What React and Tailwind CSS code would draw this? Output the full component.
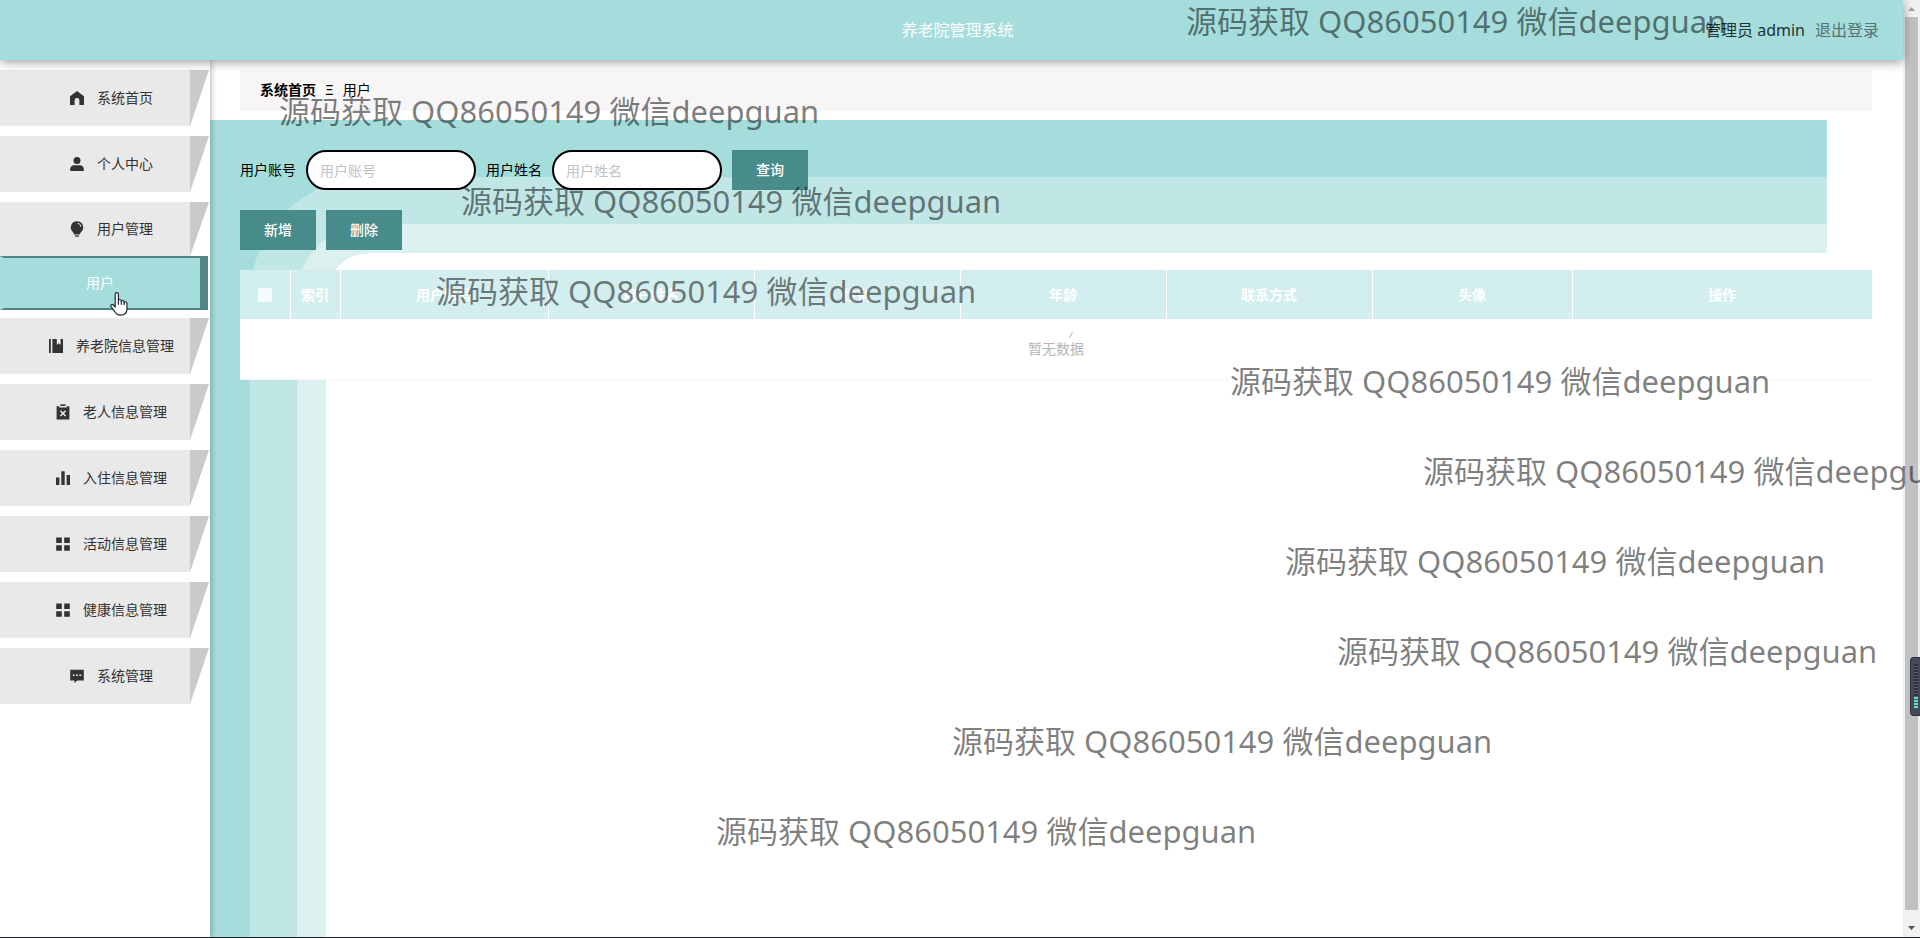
import React, { useState } from 'react';
import clsx from 'clsx';

const HomeIcon = () => (
  <svg viewBox="0 0 14 14" className="h-3.5 w-3.5" fill="currentColor">
    <path d="M7 0 0 5.2V14H4.6V9.400a2.400 2.400 0 0 1 4.800 0V14H14V5.2z" />
  </svg>
);

const UserIcon = () => (
  <svg viewBox="0 0 14 14" className="h-3.5 w-3.5" fill="currentColor">
    <circle cx="7" cy="3.6" r="3.5" />
    <path d="M0.200 14v-2.200C0.200 9.7 2 8.2 4 8.2h6c2 0 3.800 1.5 3.800 3.6V14z" />
  </svg>
);

const BulbIcon = () => (
  <svg viewBox="0 0 14 16" className="h-4 w-3.5" fill="currentColor">
    <path d="M7 0.3a6.2 6.2 0 0 0-3.8 11.1l1.2 2h5.2l1.2-2A6.2 6.2 0 0 0 7 0.3z" />
    <path d="M5 14.4h4v1.3H5z" />
    <path d="M7.6 2.2a4.2 4.2 0 0 1 3.5 3.6" fill="none" stroke="#e9e9e9" strokeWidth="1" />
  </svg>
);

const BookIcon = () => (
  <svg viewBox="0 0 14 14" className="h-3.5 w-3.5" fill="currentColor">
    <path d="M0 0h1.8v14H0zM3.400 0h4.400v6l1.900-1.700L11.600 6V0H14v14H3.400z" />
  </svg>
);

const ClipboardIcon = () => (
  <svg viewBox="0 0 14 16" className="h-4 w-3.5" fill="currentColor">
    <path d="M4.4 0.4h5.2v1.600H4.4z" />
    <path d="M0.6 2.2h2.6v1.2h7.6V2.2h2.6V15.6H0.6z" />
    <path d="m4.4 6.8 5.2 5.2M9.6 6.8 4.4 12" stroke="#e9e9e9" strokeWidth="1.6" />
  </svg>
);

const ChartIcon = () => (
  <svg viewBox="0 0 14 14" className="h-3.5 w-3.5" fill="currentColor">
    <path d="M0 6.5h3.4V14H0zM5.3 0.3h3.4V14H5.3zM10.6 4h3.4v10h-3.4z" />
  </svg>
);

const GridIcon = () => (
  <svg viewBox="0 0 14 14" className="h-3.5 w-3.5" fill="currentColor">
    <path d="M0.2 0.5h5.6v5.4H0.2zM8.2 0.5h5.6v5.4H8.2zM0.2 8.3h5.6v5.4H0.2zM8.2 8.3h5.6v5.4H8.2z" />
  </svg>
);

const ChatIcon = () => (
  <svg viewBox="0 0 14 14" className="h-3.5 w-3.5" fill="currentColor">
    <path d="M0.2 0.8h13.6v10.8H7.4L4.4 14v-2.400H0.2z" />
    <path d="M2.8 5.4h1.8v1.6H2.8zM6.1 5.4h1.8v1.6H6.1zM9.4 5.4h1.8v1.6H9.4z" fill="#e9e9e9" />
  </svg>
);

const menus = [
  { title: '系统首页', icon: HomeIcon },
  { title: '个人中心', icon: UserIcon },
  { title: '用户管理', icon: BulbIcon, children: ['用户'] },
  { title: '养老院信息管理', icon: BookIcon },
  { title: '老人信息管理', icon: ClipboardIcon },
  { title: '入住信息管理', icon: ChartIcon },
  { title: '活动信息管理', icon: GridIcon },
  { title: '健康信息管理', icon: GridIcon },
  { title: '系统管理', icon: ChatIcon },
];

const columns = [
  { title: '用户账号', width: 'w-[208px]' },
  { title: '用户姓名', width: 'w-[206px]' },
  { title: '性别', width: 'w-[206px]' },
  { title: '年龄', width: 'w-[206px]' },
  { title: '联系方式', width: 'w-[206px]' },
  { title: '头像', width: 'w-[200px]' },
  { title: '操作', width: 'w-[300px]' },
];

const watermarks = [
  { left: 1186, top: 0 },
  { left: 279, top: 90 },
  { left: 461, top: 180 },
  { left: 436, top: 270 },
  { left: 1230, top: 360 },
  { left: 1423, top: 450 },
  { left: 1285, top: 540 },
  { left: 1337, top: 630 },
  { left: 952, top: 720 },
  { left: 716, top: 810 },
];

const Header = () => (
  <header className="relative z-20 flex h-[60px] items-center justify-between bg-[#a4dddc] px-6 text-base shadow-[0_2px_10px_rgba(0,0,0,0.4)]">
    <div className="flex-1"></div>
    <h1 className="pl-3 text-white">养老院管理系统</h1>
    <div className="flex flex-1 justify-end gap-2.5">
      <span className="text-[#1f3332]">管理员 admin</span>
      <a href="#logout" className="text-[#557371]">退出登录</a>
    </div>
  </header>
);

const MenuItem = ({ title, icon: Icon, children: items }) => (
  <li className={clsx(items && '-mb-0.5')}>
    <button type="button" className={clsx('flex w-full text-sm text-[#333]', items ? 'h-[54px]' : 'h-14')}>
      <span className="flex h-full flex-1 items-center justify-center gap-[13px] bg-[#e9e9e9] pl-[33px]">
        <Icon />
        {title}
      </span>
      <span className="mr-px h-full w-[19px] bg-[#cbcacb] [clip-path:polygon(0_0,100%_0,0_100%)]"></span>
    </button>
    {items && (
      <ul>
        {items.map((item) => (
          <li key={item}>
            <a
              href="#users"
              className="mr-0.5 flex h-[54px] items-center justify-center border-y-2 border-r-8 border-l-4 border-[#528583] border-l-[#a4dddc] bg-[#a4dddc] pr-1 text-sm text-white"
            >
              {item}
            </a>
          </li>
        ))}
      </ul>
    )}
  </li>
);

const Sidebar = () => (
  <nav className="relative z-10 w-[210px] shrink-0 bg-white pt-2.5 shadow-[1px_0_6px_rgba(0,0,0,0.3)]">
    <ul className="flex flex-col gap-2.5">
      {menus.map((menu) => (
        <MenuItem key={menu.title} {...menu} />
      ))}
    </ul>
  </nav>
);

const SearchField = ({ id, label, value, onChange }) => (
  <div className="flex items-center gap-2.5">
    <label htmlFor={id}>{label}</label>
    <input
      id={id}
      type="text"
      placeholder={label}
      value={value}
      onChange={(e) => onChange(e.target.value)}
      className="h-10 w-[170px] rounded-full border-2 border-black bg-white px-3 placeholder:text-[#bfc2c8]"
    />
  </div>
);

const ActionButton = ({ children }) => (
  <button type="button" className="h-10 w-[76px] bg-[#478c8a] text-sm font-medium text-white">
    {children}
  </button>
);

// Stepped teal frame behind the list, open towards the lower right
const PanelBackground = () => (
  <div className="absolute inset-y-0 right-[76px] left-0 bg-[#a4dddb] pt-[57px] pl-10">
    <div className="h-full rounded-tl-[120px] bg-[#c0e7e6] pt-[47px] pl-[47px]">
      <div className="h-full rounded-tl-[73px] bg-[#dcf0ef] pt-[29px] pl-[29px]">
        <div className="h-full rounded-tl-[44px] bg-white"></div>
      </div>
    </div>
  </div>
);

const UserTable = () => (
  <table className="w-full table-fixed border-collapse text-sm">
    <thead>
      <tr className="h-[49px] bg-[#d3eeee] text-white">
        <th className="w-[50px] border-r border-white">
          <input type="checkbox" aria-label="全选" className="mx-auto block h-3.5 w-3.5 appearance-none rounded-xs bg-white/80" />
        </th>
        <th className="w-[50px] border-r border-white font-bold">索引</th>
        {columns.map((column) => (
          <th key={column.title} className={clsx('border-r border-white font-bold last:border-r-0', column.width)}>
            {column.title}
          </th>
        ))}
      </tr>
    </thead>
    <tbody>
      <tr className="h-[60px] border-b border-[#f3f5f6] bg-white">
        <td colSpan={9} className="text-center text-[#b4b6ba]">
          <span className="relative">
            暂无数据
            <svg viewBox="0 0 6 8" className="absolute -top-2 right-2.5 h-2 w-1.5" fill="none" stroke="#b0b3b5">
              <path d="M4.500 1 1.500 7" />
            </svg>
          </span>
        </td>
      </tr>
    </tbody>
  </table>
);

const UserPage = () => {
  const [account, setAccount] = useState('');
  const [name, setName] = useState('');

  return (
    <main className="flex min-w-0 flex-1 flex-col pt-2.5">
      <div className="mr-[31px] mb-2.5 ml-[30px] flex h-10 items-center gap-[9px] border-b border-[#efedee] bg-[#f7f5f6] px-5 text-sm text-black">
        <a href="#home" className="font-bold">系统首页</a>
        <span>Ξ</span>
        <span>用户</span>
      </div>
      <section className="relative flex-1">
        <PanelBackground />
        <div className="relative flex flex-col gap-5 pt-[30px] pr-[31px] pl-[30px] text-sm text-black">
          <form className="flex gap-2.5" onSubmit={(e) => e.preventDefault()}>
            <SearchField id="account" label="用户账号" value={account} onChange={setAccount} />
            <SearchField id="name" label="用户姓名" value={name} onChange={setName} />
            <ActionButton>查询</ActionButton>
          </form>
          <div className="flex gap-2.5">
            <ActionButton>新增</ActionButton>
            <ActionButton>删除</ActionButton>
          </div>
          <UserTable />
        </div>
      </section>
    </main>
  );
};

const ScrollBar = () => (
  <div className="flex w-[17px] shrink-0 flex-col items-center bg-[#f1f1f1]" aria-hidden="true">
    <svg viewBox="0 0 17 17" className="h-[17px] w-[17px]" fill="#a3a3a3">
      <path d="M5 11h7L8.500 7z" />
    </svg>
    <div className="w-[13px] flex-1 bg-[#c1c1c1]"></div>
    <svg viewBox="0 0 17 27" className="h-[27px] w-[17px]" fill="#505050">
      <path d="M5 16h7l-3.500 4z" />
    </svg>
  </div>
);

const HandCursor = () => (
  <svg viewBox="0 0 18 24" className="absolute top-[292px] left-[110px] h-6 w-[18px]" fill="#fff" stroke="#1b2b33" strokeWidth="1.2" strokeLinejoin="round">
    <path d="M5.200 15V2.200c0-2 3.200-2 3.200 0V8.600c0-1.600 2.900-1.500 2.900.3v.6c.2-1.500 2.800-1.300 2.800.4v.7c.3-1.300 2.900-1.100 2.900.6v5.300c0 4.200-2.400 6.700-6.300 6.700-3.400 0-4.900-1.600-6.200-3.900L1 14.600c-.8-1.600.9-2.900 2.300-1.600z" />
    <path d="M8.400 8.600v4.200M11.300 9.200v3.600M14.100 10v3" fill="none" />
  </svg>
);

const LevelMeter = () => (
  <div className="absolute top-[657px] right-0 flex h-[59px] w-2.5 flex-col items-end justify-end rounded-l-sm border border-r-0 border-[#2d2f42] bg-[#454858] py-1.5 pr-0.5">
    <div className="w-1 flex-1 bg-[repeating-linear-gradient(#2c2f3f_0_2px,#5b5e70_2px_3px)]"></div>
    <div className="h-3 w-1 bg-[repeating-linear-gradient(#6fdcc0_0_2px,#2f5f5c_2px_3px)]"></div>
  </div>
);

// Everything floating above the page: watermark lines, pointer, level meter
const Overlay = () => (
  <div className="pointer-events-none absolute inset-0 z-30 overflow-hidden">
    {watermarks.map(({ left, top }) => (
      <p
        key={top}
        className="absolute text-[31px] leading-[42px] whitespace-nowrap text-black/50"
        style={{ left, top }}
      >
        源码获取 QQ86050149 微信deepguan
      </p>
    ))}
    <HandCursor />
    <LevelMeter />
  </div>
);

const App = () => (
  <div className="relative flex min-h-screen overflow-hidden border-b border-[#20242a] bg-white font-['Noto_Sans','Noto_Sans_CJK_SC',sans-serif]">
    <div className="flex min-w-0 flex-1 flex-col">
      <Header />
      <div className="flex flex-1">
        <Sidebar />
        <UserPage />
      </div>
    </div>
    <ScrollBar />
    <Overlay />
  </div>
);

export default App;
